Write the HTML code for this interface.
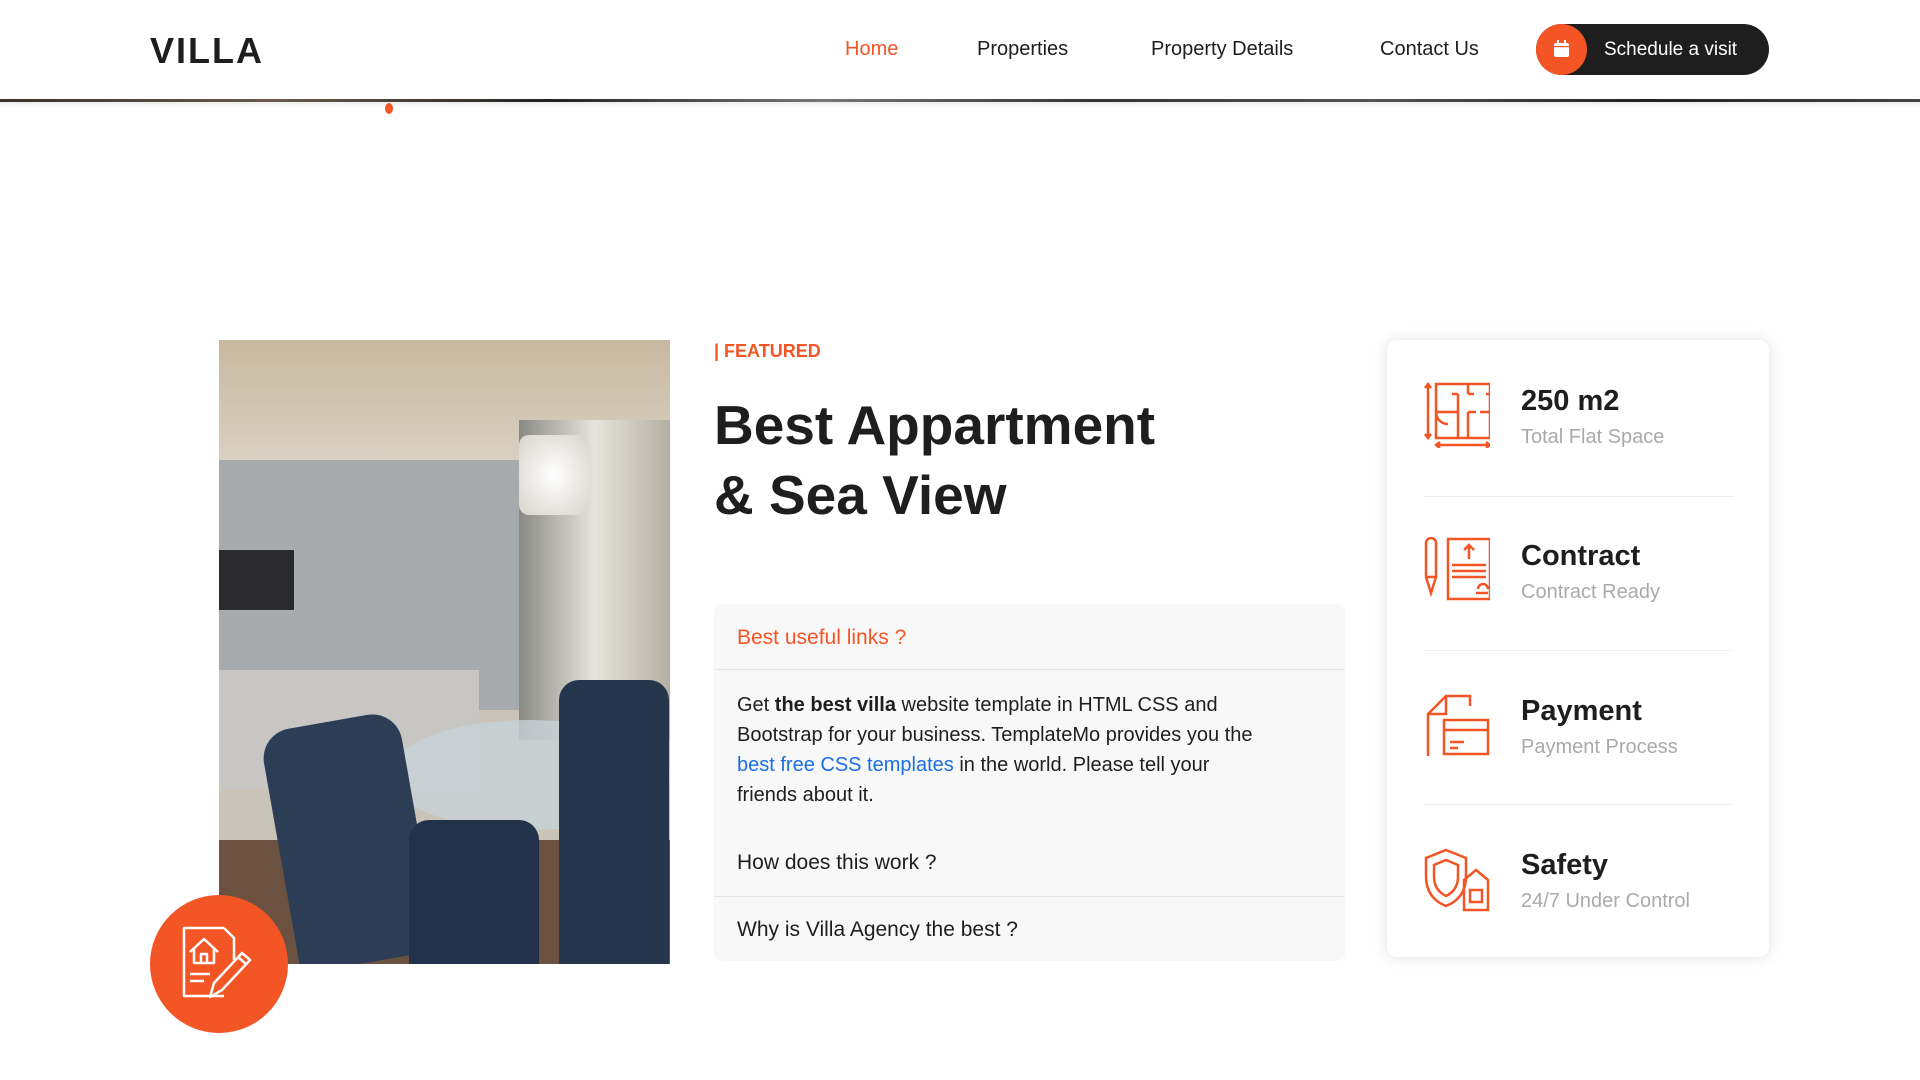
<!DOCTYPE html>
<html><head><meta charset="utf-8"><style>
*{margin:0;padding:0;box-sizing:border-box}
body{width:1920px;height:1080px;background:#fff;font-family:"Liberation Sans",sans-serif;position:relative;overflow:hidden;color:#1e1e1e}
.a{position:absolute}
.nav a{position:absolute;top:38px;font-size:20px;color:#1e1e1e;white-space:nowrap}
.ci{position:absolute;left:1424px;width:66px;height:66px}
.ct{position:absolute;left:1521px;font-size:29px;font-weight:bold;color:#1e1e1e}
.cs{position:absolute;left:1521px;font-size:20px;color:#aaa}
.sep{position:absolute;left:1424px;width:310px;height:1px;background:#eee}
</style></head><body>
<div class="a" style="left:150px;top:30px;font-size:36px;font-weight:bold;letter-spacing:2px">VILLA</div>
<div class="nav">
<a style="left:845px;color:#f35525">Home</a>
<a style="left:977px">Properties</a>
<a style="left:1151px">Property Details</a>
<a style="left:1380px">Contact Us</a>
</div>
<div class="a" style="left:1536px;top:24px;width:233px;height:51px;border-radius:26px;background:#1e1e1e"></div>
<div class="a" style="left:1536px;top:24px;width:51px;height:51px;border-radius:50%;background:#f35525"></div>
<svg class="a" style="left:1553px;top:40px" width="17" height="18" viewBox="0 0 17 18"><rect x="1" y="3" width="15" height="14" rx="2" fill="#fff"/><rect x="4" y="0" width="2" height="5" fill="#fff"/><rect x="11" y="0" width="2" height="5" fill="#fff"/><rect x="1" y="6" width="15" height="1.2" fill="#f35525"/></svg>
<div class="a" style="left:1604px;top:39px;font-size:19px;color:#fff">Schedule a visit</div>
<div class="a" style="left:0;top:99px;width:1920px;height:3px;background:linear-gradient(90deg,#3a3128,#6b5c4c,#222,#777,#333,#555,#222,#444)"></div>
<div class="a" style="left:0;top:102px;width:1920px;height:6px;background:linear-gradient(#eee,#fff)"></div>
<div class="a" style="left:385px;top:103px;width:8px;height:11px;border-radius:50%;background:#f35525"></div>

<div class="a" style="left:219px;top:340px;width:451px;height:624px;overflow:hidden;background:#c9c3b8">
<div class="a" style="left:0;top:0;width:451px;height:120px;background:linear-gradient(#c8b89f,#d8d0c2)"></div>
<div class="a" style="left:0;top:120px;width:300px;height:250px;background:#a8abae"></div>
<div class="a" style="left:0;top:210px;width:75px;height:60px;background:#2a2a2c"></div>
<div class="a" style="left:300px;top:80px;width:151px;height:320px;background:linear-gradient(90deg,#8a8a84,#e6e4dc,#b5b0a4)"></div>
<div class="a" style="left:0;top:330px;width:260px;height:120px;background:#c8c6c2"></div>
<div class="a" style="left:170px;top:380px;width:281px;height:110px;border-radius:50%;background:rgba(200,210,215,.8)"></div>
<div class="a" style="left:0;top:500px;width:451px;height:124px;background:#6b5240"></div>
<div class="a" style="left:60px;top:380px;width:140px;height:244px;background:#2c3d55;border-radius:30px 30px 0 0;transform:rotate(-10deg)"></div>
<div class="a" style="left:340px;top:340px;width:110px;height:284px;background:#26364d;border-radius:20px 20px 0 0"></div>
<div class="a" style="left:190px;top:480px;width:130px;height:144px;background:#22324a;border-radius:20px 20px 0 0"></div>
<div class="a" style="left:300px;top:95px;width:70px;height:80px;background:radial-gradient(#fff,#d8d4cc);border-radius:10px"></div>
</div>
<div class="a" style="left:150px;top:895px;width:138px;height:138px;border-radius:50%;background:#f35525"></div>
<svg class="a" style="left:180px;top:925px" width="80" height="80" viewBox="0 0 80 80" fill="none" stroke="#fff" stroke-width="2.5" stroke-linejoin="round"><path d="M44 3H4v68h40M44 3l10 10v22"/><path d="M10 27l14-13 14 13M14 24v14h20V24M21 38v-9h6v9M10 49h20M10 56h14"/><path d="M30 72l4-14 28-30 8 7-28 30zM58 32l8 7"/></svg>

<div class="a" style="left:714px;top:341px;font-size:18px;font-weight:bold;color:#f35525">| FEATURED</div>
<div class="a" style="left:714px;top:390px;font-size:55px;font-weight:bold;line-height:70px;color:#1e1e1e">Best Appartment<br>&amp; Sea View</div>
<div class="a" style="left:714px;top:604px;width:631px;height:357px;background:#f8f8f8;border-radius:8px"></div>
<div class="a" style="left:714px;top:669px;width:631px;height:1px;background:#e6e6e6"></div>
<div class="a" style="left:714px;top:896px;width:631px;height:1px;background:#e6e6e6"></div>
<div class="a" style="left:737px;top:626px;font-size:21px;color:#f35525">Best useful links ?</div>
<div class="a" style="left:737px;top:690px;width:600px;font-size:20px;line-height:30px;color:#1e1e1e">Get <b>the best villa</b> website template in HTML CSS and<br>Bootstrap for your business. TemplateMo provides you the<br><span style="color:#1a6ee6">best free CSS templates</span> in the world. Please tell your<br>friends about it.</div>
<div class="a" style="left:737px;top:851px;font-size:21px">How does this work ?</div>
<div class="a" style="left:737px;top:918px;font-size:21px">Why is Villa Agency the best ?</div>

<div class="a" style="left:1387px;top:340px;width:382px;height:617px;background:#fff;border-radius:10px;box-shadow:0 0 15px rgba(0,0,0,.12)"></div>
<svg class="ci" style="top:382px" viewBox="0 0 66 66" fill="none" stroke="#f35525" stroke-width="2.5"><path d="M12 2h54v54H12zM4 2v54M1 6l3-4 3 4M1 52l3 4 3-4M12 63h54M16 60l-4 3 4 3M62 60l4 3-4 3M12 30h22v26M34 30V12M28 12h6M44 2v10M50 12h-6M56 30h10M44 30h8M44 30v26M12 30a12 12 0 0 0 12 12M66 12h-4"/></svg>
<svg class="ci" style="top:537px" viewBox="0 0 66 66" fill="none" stroke="#f35525" stroke-width="2.5"><path d="M24 2h42v60H24zM2 6a5 5 0 0 1 10 0v34H2zM2 40l5 16 5-16M45 22V8M40 13l5-5 5 5M28 28h34M28 34h34M28 40h34M52 56h12M54 52a5 5 0 0 1 10 0"/></svg>
<svg class="ci" style="top:692px" viewBox="0 0 66 66" fill="none" stroke="#f35525" stroke-width="2.5"><path d="M4 64V22L22 4h24v10M22 4v18H4M20 28h44v34H20zM20 38h44M26 50h14M26 56h8"/></svg>
<svg class="ci" style="top:846px" viewBox="0 0 66 66" fill="none" stroke="#f35525" stroke-width="2.5"><path d="M22 4l20 8v18c0 18-10 26-20 30C12 56 2 48 2 30V12zM22 14l12 5v12c0 11-6 16-12 19-6-3-12-8-12-19V19zM40 64V34l12-10 12 10v30zM46 44h12v12H46z"/></svg>
<div class="ct" style="top:385px">250 m2</div><div class="cs" style="top:426px">Total Flat Space</div>
<div class="sep" style="top:496px"></div>
<div class="ct" style="top:540px">Contract</div><div class="cs" style="top:581px">Contract Ready</div>
<div class="sep" style="top:650px"></div>
<div class="ct" style="top:695px">Payment</div><div class="cs" style="top:736px">Payment Process</div>
<div class="sep" style="top:804px"></div>
<div class="ct" style="top:849px">Safety</div><div class="cs" style="top:890px">24/7 Under Control</div>
</body></html>
